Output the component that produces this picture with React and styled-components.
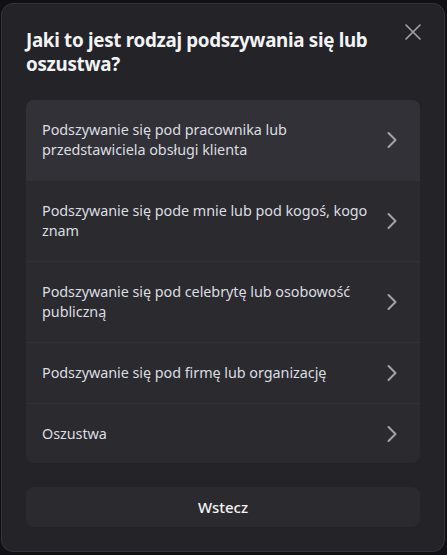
import React from "react"
import styled, { createGlobalStyle } from "styled-components"


const GlobalStyle = createGlobalStyle`
body{
    margin: 0;
    background-color: #111113;
    font-family: "Noto Sans", "Open Sans", sans-serif;
}
`


const options = [
    "Podszywanie się pod pracownika lub przedstawiciela obsługi klienta",
    "Podszywanie się pode mnie lub pod kogoś, kogo znam",
    "Podszywanie się pod celebrytę lub osobowość publiczną",
    "Podszywanie się pod firmę lub organizację",
    "Oszustwa",
]


function Chevron(){
    return(
        <ChevronIcon width="24" height="24" viewBox="0 0 24 24" fill="none">
            <path d="M8.5 5l7 7-7 7" stroke="#a3a3ab" strokeWidth="2" strokeLinecap="round" strokeLinejoin="round"/>
        </ChevronIcon>
    )
}


export default function App(){

    return(
        <>
            <GlobalStyle/>
            <Modal>

                <CloseButton aria-label="Zamknij">
                    <svg width="16" height="16" viewBox="0 0 16 16" fill="none">
                        <path d="M1 1l14 14M15 1L1 15" stroke="#a3a3ab" strokeWidth="1.6" strokeLinecap="round"/>
                    </svg>
                </CloseButton>

                <Title>Jaki to jest rodzaj podszywania się lub oszustwa?</Title>

                <OptionList>
                    {options.map((text, i) => (
                        <Option key={text} $active={i === 0}>
                            <OptionText>{text}</OptionText>
                            <Chevron/>
                        </Option>
                    ))}
                </OptionList>

                <BackButton>Wstecz</BackButton>

            </Modal>
        </>
    )
}


const Modal = styled.div`
    position: relative;
    box-sizing: border-box;
    width: 444px;
    height: 549px;
    margin: 3px 0 0 1px;
    padding: 24px 24px;
    background-color: #232328;
    border: 1px solid #34343a;
    border-radius: 12px;
    display: flex;
    flex-direction: column;
`

const CloseButton = styled.button`
    position: absolute;
    top: 20px;
    right: 23px;
    padding: 0;
    border: none;
    background: none;
    display: flex;
    cursor: pointer;
`

const Title = styled.h1`
    margin: 0;
    width: 350px;
    font-size: 18.8px;
    line-height: 24px;
    letter-spacing: -0.3px;
    font-weight: 700;
    color: #f2f3f5;
`

const OptionList = styled.div`
    margin-top: 24px;
    background-color: #2a2a2f;
    border-radius: 8px;
    overflow: hidden;
    display: flex;
    flex-direction: column;

    & > div + div{
        border-top: 1px solid #313137;
    }
`

const Option = styled.div`
    display: flex;
    align-items: center;
    gap: 6px;
    padding: 20px 16px;
    background-color: ${p => p.$active ? "#313137" : "#2a2a2f"};
    cursor: pointer;
`

const OptionText = styled.div`
    flex: 1;
    font-size: 14.4px;
    line-height: 20px;
    letter-spacing: -0.05px;
    color: #dcdde1;
`

const ChevronIcon = styled.svg`
    display: block;
    flex-shrink: 0;
    margin: -2px 0;
`

const BackButton = styled.button`
    margin-top: 24px;
    height: 40px;
    border: none;
    border-radius: 8px;
    background-color: #2a2a2f;
    color: #f2f3f5;
    font-family: inherit;
    font-size: 15px;
    font-weight: 500;
    cursor: pointer;
`
